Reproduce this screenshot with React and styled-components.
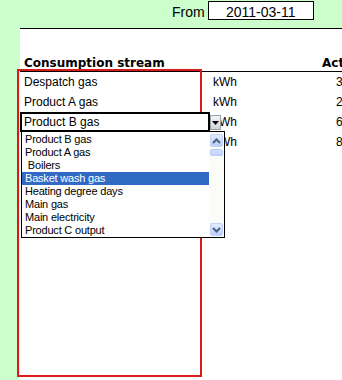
import React from "react";
import styled, { createGlobalStyle } from "styled-components";

const GlobalStyle = createGlobalStyle`
  html, body {
    margin: 0;
    padding: 0;
    background: #ffffff;
  }
  body {
    width: 342px;
    height: 380px;
    overflow: hidden;
    font-family: "Liberation Sans", Arial, sans-serif;
  }
`;

const rows = [
  { name: "Despatch gas", unit: "kWh", value: "3 412" },
  { name: "Product A gas", unit: "kWh", value: "2 118" },
  { name: "Product B gas", unit: "kWh", value: "6 093", active: true },
  { name: "", unit: "kWh", value: "8 257" },
];

const options = [
  "Product B gas",
  "Product A gas",
  " Boilers",
  "Basket wash gas",
  "Heating degree days",
  "Main gas",
  "Main electricity",
  "Product C output",
];

const Chevron = ({ up }) => (
  <svg width="9" height="6" viewBox="0 0 9 6">
    <polyline
      points={up ? "1,5 4.5,1.5 8,5" : "1,1 4.5,4.5 8,1"}
      fill="none"
      stroke="#4d6185"
      strokeWidth="2"
    />
  </svg>
);

const App = () => {
  return (
    <Page>
      <GlobalStyle />
      <TopBar>
        <Label>From</Label>
        <DateBox>2011-03-11</DateBox>
      </TopBar>
      <Body>
        <Strip />
        <Sheet>
          <HeaderRow>
            <HeadCell>Consumption stream</HeadCell>
            <HeadCell />
            <HeadCell>Actual</HeadCell>
          </HeaderRow>
          {rows.map((r, i) => (
            <Row key={i}>
              <NameCell $active={r.active}>
                {r.name}
                {r.active && (
                  <>
                    <DropButton>
                      <svg width="7" height="4" viewBox="0 0 7 4">
                        <polygon points="0,0 7,0 3.5,4" fill="#000" />
                      </svg>
                    </DropButton>
                    <List>
                      <Items>
                        {options.map((o, j) => (
                          <Item key={j} $selected={j === 3}>
                            {o}
                          </Item>
                        ))}
                      </Items>
                      <ScrollBar>
                        <ScrollButton>
                          <Chevron up />
                        </ScrollButton>
                        <Thumb />
                        <Track />
                        <ScrollButton>
                          <Chevron />
                        </ScrollButton>
                      </ScrollBar>
                    </List>
                  </>
                )}
              </NameCell>
              <Cell>{r.unit}</Cell>
              <ValueCell>{r.value}</ValueCell>
            </Row>
          ))}
        </Sheet>
      </Body>
      <RedFrame />
    </Page>
  );
};

export default App;

const Page = styled.div`
  position: relative;
  width: 342px;
  height: 380px;
  overflow: hidden;
  display: flex;
  flex-direction: column;
  background: #ccffcc;
`;

const TopBar = styled.div`
  height: 28px;
  display: flex;
  align-items: flex-start;
  padding-left: 172px;
  gap: 3px;
  font-size: 14px;
  color: #000;
`;

const Label = styled.span`
  line-height: 20px;
  padding-top: 2px;
`;

const DateBox = styled.div`
  margin-top: 1px;
  width: 106px;
  height: 19px;
  box-sizing: border-box;
  border: 1px solid #000;
  background: #fff;
  text-align: center;
  line-height: 18px;
  padding-top: 1px;
  overflow: hidden;
`;

const Body = styled.div`
  flex: 1;
  display: flex;
`;

const Strip = styled.div`
  width: 20px;
  flex-shrink: 0;
  background: #ccffcc;
`;

const Sheet = styled.div`
  flex: 1;
  background: #fff;
  border-top: 1px solid #000;
  overflow: hidden;
`;

const columns = "190px 108px 160px";

const HeaderRow = styled.div`
  display: grid;
  grid-template-columns: ${columns};
  height: 43px;
  box-sizing: border-box;
  border-bottom: 1px solid #000;
  align-items: end;
`;

const HeadCell = styled.div`
  font-family: "DejaVu Sans", Tahoma, sans-serif;
  font-weight: bold;
  font-size: 12px;
  line-height: 14px;
  padding: 0 0 1px 4px;
  white-space: nowrap;
`;

const Row = styled.div`
  display: grid;
  grid-template-columns: ${columns};
  height: 20px;
  font-size: 12px;
  line-height: 20px;
`;

const Cell = styled.div`
  padding-left: 3px;
  white-space: nowrap;
`;

const NameCell = styled.div`
  position: relative;
  padding-left: 4px;
  white-space: nowrap;
  ${(p) =>
    p.$active &&
    `
    z-index: 3;
    background: #fff;
    box-shadow: inset 0 0 0 2px #000;
  `}
`;

const ValueCell = styled.div`
  padding-left: 18px;
  white-space: nowrap;
`;

const DropButton = styled.div`
  position: absolute;
  left: 190px;
  top: 3px;
  width: 11px;
  height: 15px;
  box-sizing: border-box;
  border: 1px solid #9aa0a8;
  background: linear-gradient(#f4f4f4, #d2d4d8);
  display: flex;
  align-items: center;
  justify-content: center;
`;

const List = styled.div`
  position: absolute;
  left: 1px;
  top: 19px;
  width: 204px;
  height: 107px;
  box-sizing: border-box;
  border: 1px solid #000;
  background: #fff;
  display: flex;
  font-family: "Liberation Sans", Tahoma, sans-serif;
  font-size: 11px;
  letter-spacing: -0.2px;
`;

const Items = styled.div`
  flex: 1;
  padding-top: 1px;
  overflow: hidden;
`;

const Item = styled.div`
  height: 13px;
  line-height: 13px;
  padding-left: 3px;
  white-space: pre;
  color: ${(p) => (p.$selected ? "#fff" : "#000")};
  background: ${(p) => (p.$selected ? "#316ac5" : "transparent")};
`;

const ScrollBar = styled.div`
  width: 15px;
  box-sizing: border-box;
  padding: 2px 1px 1px 1px;
  display: flex;
  flex-direction: column;
  background: #fbfbf9;
`;

const ScrollButton = styled.div`
  height: 13px;
  box-sizing: border-box;
  border: 1px solid #c3d3f8;
  border-radius: 2px;
  background: linear-gradient(#e2ebfe, #bccffa);
  display: flex;
  align-items: center;
  justify-content: center;
`;

const Thumb = styled.div`
  margin-top: 2px;
  height: 7px;
  box-sizing: border-box;
  border: 1px solid #b8cbf6;
  border-radius: 2px;
  background: linear-gradient(#d4e1fd, #c1d3fb);
`;

const Track = styled.div`
  flex: 1;
`;

const RedFrame = styled.div`
  position: absolute;
  left: 17px;
  top: 69px;
  width: 185px;
  height: 308px;
  box-sizing: border-box;
  border: 2px solid #dd1a1a;
  z-index: 2;
  pointer-events: none;
`;
